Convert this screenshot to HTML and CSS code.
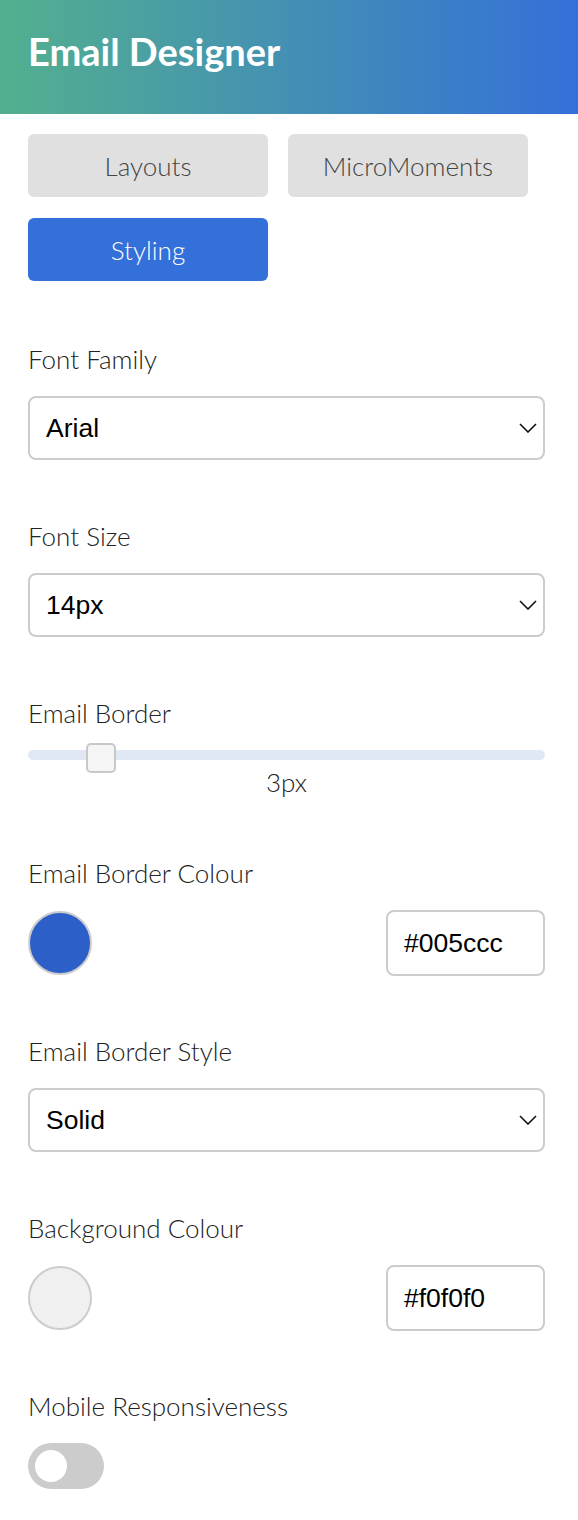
FILE: index.html
```html
<!DOCTYPE html>
<html lang="en">
<head>
    <meta charset="UTF-8">
    <title>Email Designer</title>
    <link rel="stylesheet" href="styles.css">
</head>
<body>
<div class="designer">
  <div class="topbar">
    <h1>Email Designer</h1>
  </div>

  <div class="panel">
    <div class="tabs">
      <button class="tab">Layouts</button>
      <button class="tab">MicroMoments</button>
      <button class="tab active">Styling</button>
    </div>

    <div class="field">
      <label>Font Family</label>
      <div class="select-wrap">
        <select>
          <option>Arial</option>
          <option>Helvetica</option>
          <option>Georgia</option>
        </select>
        <svg class="chevron" width="18" height="10" viewBox="0 0 18 10"><path d="M1 1l8 8 8-8" fill="none" stroke="#111" stroke-width="1.6"/></svg>
      </div>
    </div>

    <div class="field">
      <label>Font Size</label>
      <div class="select-wrap">
        <select>
          <option>14px</option>
          <option>16px</option>
        </select>
        <svg class="chevron" width="18" height="10" viewBox="0 0 18 10"><path d="M1 1l8 8 8-8" fill="none" stroke="#111" stroke-width="1.6"/></svg>
      </div>
    </div>

    <div class="field">
      <label>Email Border</label>
      <input type="range" class="slider" min="0" max="25" value="3">
      <div class="slider-value">3px</div>
    </div>

    <div class="field">
      <label>Email Border Colour</label>
      <div class="color-row">
        <span class="swatch blue"></span>
        <input type="text" class="hex" value="#005ccc">
      </div>
    </div>

    <div class="field">
      <label>Email Border Style</label>
      <div class="select-wrap">
        <select>
          <option>Solid</option>
          <option>Dashed</option>
        </select>
        <svg class="chevron" width="18" height="10" viewBox="0 0 18 10"><path d="M1 1l8 8 8-8" fill="none" stroke="#111" stroke-width="1.6"/></svg>
      </div>
    </div>

    <div class="field">
      <label>Background Colour</label>
      <div class="color-row">
        <span class="swatch light"></span>
        <input type="text" class="hex" value="#f0f0f0">
      </div>
    </div>

    <div class="field">
      <label>Mobile Responsiveness</label>
      <div class="toggle"><span class="knob"></span></div>
    </div>
  </div>
</div>
</body>
</html>
```

FILE: styles.css
```css
  body {
    margin: 0;
    background: #fff;
    font-family: "Lato Light", Lato, "Open Sans", sans-serif;
    color: #222;
  }

  .topbar {
    height: 114px;
    box-sizing: border-box;
    padding: 29px 28px 0;
    background: linear-gradient(90deg, #53b08e, #3470d9);
  }

  .topbar h1 {
    margin: 0;
    font-family: Lato, sans-serif;
    font-size: 38px;
    font-weight: 700;
    line-height: 1.2;
    color: #fff;
  }

  .panel {
    padding: 20px 33px 60px 28px;
  }

  .tabs {
    display: flex;
    flex-wrap: wrap;
    gap: 21px 20px;
  }

  .tab {
    width: 240px;
    height: 63px;
    border: none;
    border-radius: 6px;
    background-color: #e0e0e0;
    color: #444;
    font-family: "Lato Light", Lato, sans-serif;
    font-size: 26px;
    font-weight: 300;
  }

  .tab.active {
    background-color: #3470d9;
    color: #fff;
  }

  .field {
    margin-top: 62px;
  }

  .tabs + .field {
    margin-top: 64px;
  }

  .field label {
    display: block;
    font-size: 26px;
    font-weight: 300;
    line-height: 29px;
    margin-bottom: 22px;
  }

  .select-wrap {
    position: relative;
    margin-top: 1px;
  }

  .select-wrap select {
    appearance: none;
    -webkit-appearance: none;
    width: 100%;
    height: 64px;
    padding: 0 16px;
    border: 2px solid #ccc;
    border-radius: 8px;
    background: #fff;
    font-family: "Liberation Sans", Arial, sans-serif;
    font-size: 26.5px;
    color: #000;
  }

  .chevron {
    position: absolute;
    right: 8px;
    top: 27px;
  }

  .slider {
    -webkit-appearance: none;
    appearance: none;
    display: block;
    width: 100%;
    height: 10px;
    margin: 2px 0 0;
    background: transparent;
  }

  .slider::-webkit-slider-runnable-track {
    height: 10px;
    border-radius: 5px;
    background: #e1e8f5;
  }

  .slider::-webkit-slider-thumb {
    -webkit-appearance: none;
    box-sizing: border-box;
    width: 30px;
    height: 30px;
    margin-top: -7px;
    border: 2px solid #c8c8c8;
    border-radius: 5px;
    background: #f5f5f5;
  }

  .slider-value {
    text-align: center;
    font-size: 26px;
    font-weight: 300;
    line-height: 29px;
    margin-top: 8px;
  }

  .color-row {
    display: flex;
    justify-content: space-between;
    align-items: center;
    margin-bottom: -1px;
  }

  .swatch {
    width: 60px;
    height: 60px;
    border: 2px solid #ccc;
    border-radius: 50%;
  }

  .swatch.blue {
    background: #2c5fc7;
  }

  .swatch.light {
    background: #f0f0f0;
  }

  .hex {
    box-sizing: border-box;
    width: 159px;
    height: 66px;
    padding: 0 16px;
    border: 2px solid #ccc;
    border-radius: 8px;
    font-family: "Liberation Sans", Arial, sans-serif;
    font-size: 26.5px;
    color: #000;
  }

  .toggle {
    position: relative;
    width: 76px;
    height: 46px;
    border-radius: 23px;
    background: #ccc;
  }

  .knob {
    position: absolute;
    left: 7px;
    top: 7px;
    width: 32px;
    height: 32px;
    border-radius: 50%;
    background: #fff;
  }
```
